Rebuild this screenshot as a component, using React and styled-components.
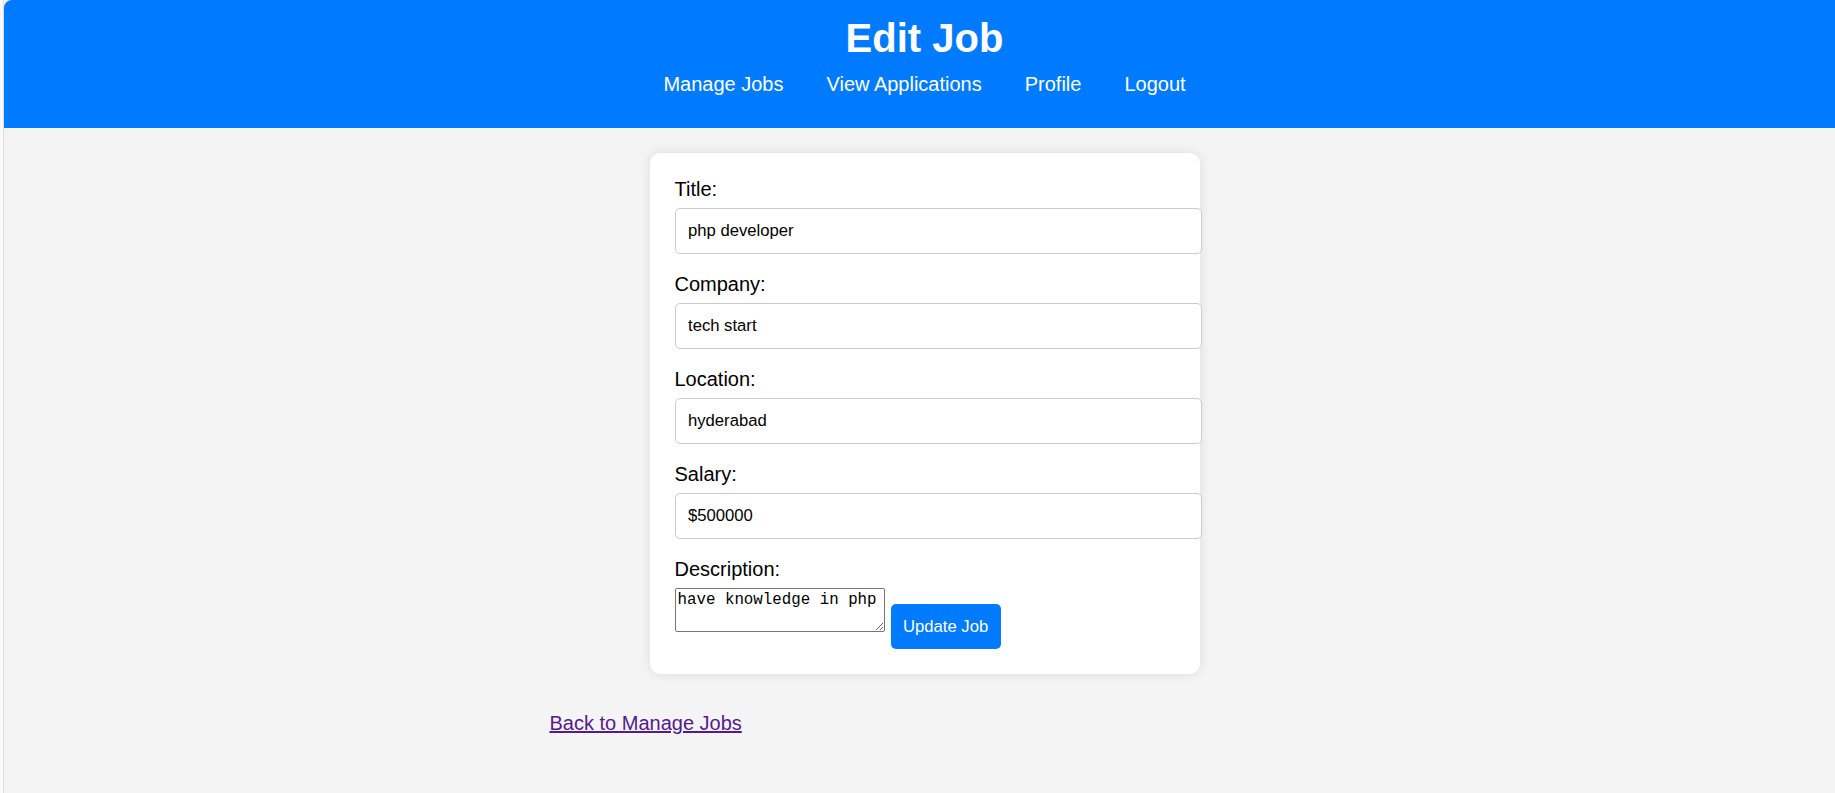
import React from "react";
import styled, { createGlobalStyle } from "styled-components";

const GlobalStyle = createGlobalStyle`
  html, body {
    margin: 0;
    padding: 0;
    overflow: hidden;
    background: #f9f9f9;
  }
  body {
    font-family: "Liberation Sans", Arial, sans-serif;
  }
`;

const Page = styled.div`
  box-sizing: border-box;
  margin-left: 3px;
  width: calc(100% + 7px);
  min-height: 793px;
  border-left: 1px solid #dedede;
  background: #f4f4f4;
  font-family: "Liberation Sans", Arial, sans-serif;
`;

const Header = styled.header`
  height: 128px;
  box-sizing: border-box;
  padding-top: 16px;
  background: #007bff;
  color: #ffffff;
  text-align: center;
  border-top-left-radius: 8px;
`;

const Title = styled.h1`
  margin: 0;
  font-size: 40px;
  font-weight: 700;
  line-height: 44.7px;
`;

const Nav = styled.nav`
  display: flex;
  justify-content: center;
  gap: 43px;
  margin-top: 12px;
`;

const NavLink = styled.a`
  color: #ffffff;
  text-decoration: none;
  font-size: 20px;
  line-height: 22.4px;
`;

const Container = styled.main`
  max-width: 750px;
  margin: 25px auto 0;
`;

const Card = styled.form`
  box-sizing: border-box;
  width: 550px;
  margin: 0 auto;
  padding: 25px;
  background: #ffffff;
  border-radius: 10px;
  box-shadow: 0 0 12px rgba(0, 0, 0, 0.1);
`;

const Label = styled.label`
  display: block;
  font-size: 20px;
  line-height: 23px;
  color: #000000;
  margin-bottom: 6.6px;
`;

const Input = styled.input`
  display: block;
  box-sizing: content-box;
  width: 100%;
  height: 19.5px;
  padding: 12.5px;
  margin: 0 0 18.9px;
  border: 1px solid #cccccc;
  border-radius: 5px;
  font-family: "Liberation Sans", Arial, sans-serif;
  font-size: 16.67px;
  line-height: 19.5px;
  color: #000000;
  background: #ffffff;
  outline: none;
`;

const Row = styled.div`
  display: flex;
  align-items: flex-start;
  gap: 6px;
`;

const TextArea = styled.textarea`
  box-sizing: border-box;
  width: 210px;
  height: 44.5px;
  padding: 2px;
  margin: 0;
  border: 1px solid #767676;
  border-radius: 2px;
  font-family: "Liberation Mono", "Courier New", monospace;
  font-size: 15.8px;
  line-height: 18px;
  color: #000000;
  background: #ffffff;
  outline: none;
`;

const Button = styled.button`
  box-sizing: border-box;
  height: 44.7px;
  margin-top: 16.7px;
  padding: 0 12.5px;
  border: none;
  border-radius: 5px;
  background: #007bff;
  color: #ffffff;
  font-family: "Liberation Sans", Arial, sans-serif;
  font-size: 16.67px;
  cursor: pointer;
`;

const BackPara = styled.p`
  margin: 38px 0 0;
  font-size: 20px;
  line-height: 22.4px;
`;

const BackLink = styled.a`
  color: #551a8b;
  text-decoration: underline;
`;

const fields = [
  { label: "Title:", value: "php developer" },
  { label: "Company:", value: "tech start" },
  { label: "Location:", value: "hyderabad" },
  { label: "Salary:", value: "$500000" },
];

export default function App() {
  return (
    <>
      <GlobalStyle />
      <Page>
        <Header>
          <Title>Edit Job</Title>
          <Nav>
            <NavLink href="#">Manage Jobs</NavLink>
            <NavLink href="#">View Applications</NavLink>
            <NavLink href="#">Profile</NavLink>
            <NavLink href="#">Logout</NavLink>
          </Nav>
        </Header>
        <Container>
          <Card onSubmit={(e) => e.preventDefault()}>
            {fields.map((f) => (
              <React.Fragment key={f.label}>
                <Label>{f.label}</Label>
                <Input type="text" defaultValue={f.value} />
              </React.Fragment>
            ))}
            <Label>Description:</Label>
            <Row>
              <TextArea defaultValue="have knowledge in php" />
              <Button type="submit">Update Job</Button>
            </Row>
          </Card>
          <BackPara>
            <BackLink href="#">Back to Manage Jobs</BackLink>
          </BackPara>
        </Container>
      </Page>
    </>
  );
}
